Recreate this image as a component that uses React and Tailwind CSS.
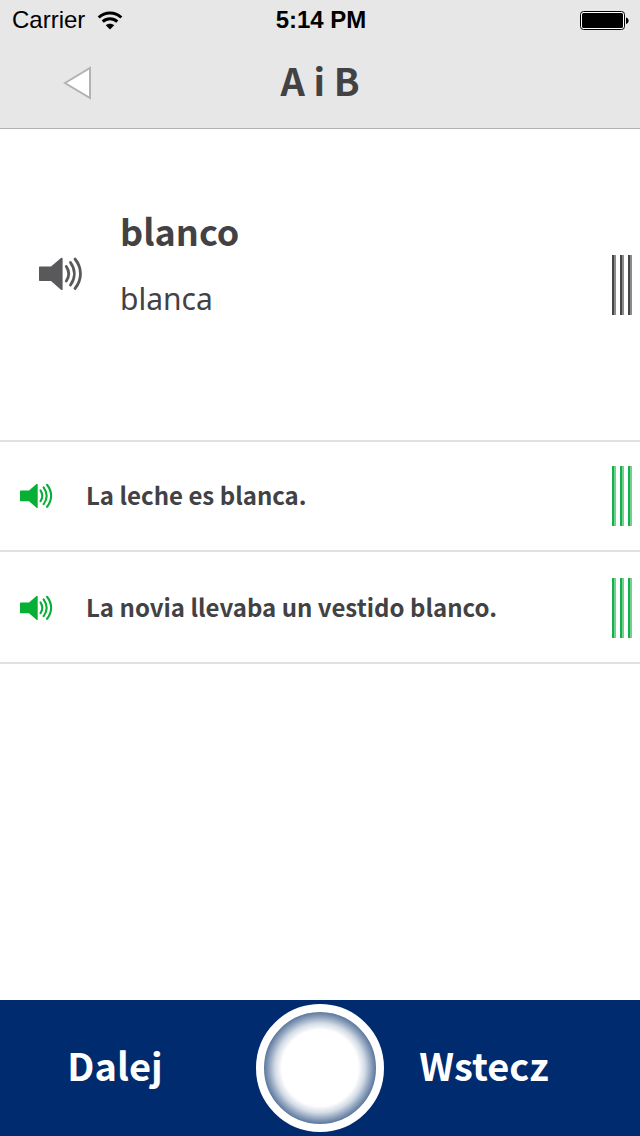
const examples = [
  { text: "La leche es blanca.", padding: "py-6" },
  { text: "La novia llevaba un vestido blanco.", padding: "pt-[26px] pb-6" },
];

function SpeakerIcon({ className }) {
  return (
    <svg viewBox="0 0 44 34" className={className} fill="none" aria-hidden="true">
      <path
        d="M1 9.500h11L22 1c.8-.6 1.600-.3 1.600.6v30.600c0 .9-.8 1.200-1.600.6l-10-8.800H1c-.6 0-1-.4-1-1V10.500c0-.6.4-1 1-1z"
        fill="currentColor"
      />
      <path
        d="M27.300 9.500c3 4.500 3 10 0 14.500M31.500 5.500c5 7 5 15.500 0 22.500M36 2c7.300 9 7.300 20.500 0 29.500"
        stroke="currentColor"
        strokeWidth="2.800"
        strokeLinecap="round"
      />
    </svg>
  );
}

function WifiIcon() {
  return (
    <svg viewBox="0 0 26 19" className="h-[19px] w-[26px]" fill="none" aria-hidden="true">
      <path
        d="M1.700 6.500c6.500-6 16.100-6 22.600 0M5.700 10.700c4.300-3.900 10.300-3.900 14.600 0"
        stroke="black"
        strokeWidth="3"
      />
      <path d="M13 18.500l-4.200-4.300c2.500-2 5.900-2 8.400 0z" fill="black" />
    </svg>
  );
}

function BatteryIcon() {
  return (
    <svg viewBox="0 0 50 20" className="h-5 w-[50px]" aria-hidden="true">
      <rect x=".5" y="1.500" width="44" height="18" rx="3" fill="white" stroke="black" />
      <rect x="2" y="3" width="41" height="15" rx="1.500" fill="black" />
      <path d="M46 7.500c3.500.5 3.500 6 0 6.500z" fill="black" />
    </svg>
  );
}

function Handle({ label, bar }) {
  return (
    <button type="button" aria-label={label} className="flex h-[60px] shrink-0 gap-1">
      <span className={bar} />
      <span className={bar} />
      <span className={bar} />
    </button>
  );
}

export default function App() {
  return (
    <div className="flex min-h-screen flex-col bg-white font-['Noto_Sans_CJK_SC','Noto_Sans',sans-serif] text-[#424244]">
      <header className="border-b border-[#b1b1b1] bg-[#e7e7e7]">
        <div className="grid h-10 grid-cols-3 items-center pr-[10px] pl-3 font-['Liberation_Sans',Arial,sans-serif] text-2xl text-black">
          <div className="flex items-center gap-3">
            <span>Carrier</span>
            <WifiIcon />
          </div>
          <span className="text-center font-bold">5:14 PM</span>
          <div className="flex justify-end">
            <BatteryIcon />
          </div>
        </div>
        <div className="grid h-[88px] grid-cols-[1fr_auto_1fr] items-center px-[62px]">
          <button type="button" aria-label="Back" className="justify-self-start">
            <svg viewBox="0 0 32 36" className="h-9 w-8" aria-hidden="true">
              <path d="M3 17L28 2v30z" fill="white" stroke="#b1b2b4" strokeWidth="2" />
            </svg>
          </button>
          <h1 className="pb-2 text-[38px] leading-[48px] font-bold">A i B</h1>
        </div>
      </header>

      <main className="flex-1">
        <section className="flex items-center border-b-2 border-[#e1e1e1] pt-[72px] pr-2 pb-[71px] pl-[39px]">
          <button type="button" aria-label="Play blanco" className="mb-[22px] text-[#59595b]">
            <SpeakerIcon className="h-[34px] w-11" />
          </button>
          <div className="mb-[42px] flex-1 pl-[37px]">
            <h2 className="text-4xl leading-[58px] font-bold">blanco</h2>
            <p className="mt-3 font-['Noto_Sans',sans-serif] text-[30px] leading-[56px]">blanca</p>
          </div>
          <Handle
            label="Word options"
            bar="w-1 border-r-2 border-[#8c8c8c] bg-[#464648]"
          />
        </section>

        <ul>
          {examples.map(({ text, padding }) => (
            <li
              key={text}
              className={`flex items-center border-b-2 border-[#e1e1e1] pr-2 pl-5 ${padding}`}
            >
              <button type="button" aria-label={`Play ${text}`} className="text-[#05b035]">
                <SpeakerIcon className="h-[26px] w-[33px]" />
              </button>
              <p className="flex-1 pb-0.5 pl-[33px] text-2xl font-bold">{text}</p>
              <Handle
                label="Sentence options"
                bar="w-1 border-r-2 border-[#73d093] bg-[#16b04b]"
              />
            </li>
          ))}
        </ul>
      </main>

      <footer className="grid h-[136px] grid-cols-[1fr_128px_1fr] items-center bg-[#002b6f] text-[38px] font-bold text-white">
        <button type="button" className="pr-[26px] pb-2">
          Dalej
        </button>
        <button
          type="button"
          aria-label="Home"
          className="h-32 rounded-full border-8 border-white bg-[radial-gradient(circle_closest-side,#fff_68%,#d4dce6_80%,#8fa3bd_91%,#5c789d_100%)]"
        />
        <button type="button" className="pr-[56px] pb-2">
          Wstecz
        </button>
      </footer>
    </div>
  );
}
